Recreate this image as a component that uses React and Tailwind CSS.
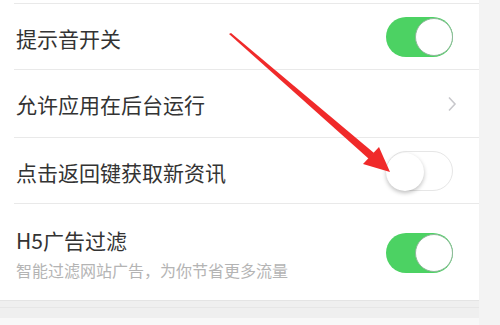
import React from 'react';

const font = { fontFamily: '"Noto Sans CJK SC", "Noto Sans", sans-serif' };

const Toggle = ({ on }) => (
  <div
    className={`relative w-[67px] h-[40px] rounded-full ${
      on ? 'bg-[#4cd263]' : 'bg-white border border-[#e6e6e6]'
    }`}
  >
    <div
      className={`absolute top-[1px] w-[38px] h-[38px] rounded-full bg-white ${
        on
          ? 'right-[0px] border border-[#8fb89a]'
          : 'left-[-1px] top-[0px] shadow-[0_2px_4px_rgba(0,0,0,0.25)]'
      }`}
    />
  </div>
);

const Row = ({ children, right, className }) => (
  <div className={`flex items-center justify-between pl-4 pr-[26px] ${className}`}>
    {children}
    {right}
  </div>
);

const Divider = () => <div className="ml-[14px] h-px bg-[#e9e9e9]" />;

export default function App() {
  return (
    <div className="relative flex w-[500px] h-[325px] overflow-hidden bg-[#f3f3f3]" style={font}>
      <div className="w-[479px] flex flex-col bg-white">
        <div className="h-[3px]" />
        <Divider />
        <Row className="h-[65px]" right={<Toggle on />}>
          <span className="text-[21px] text-[#333] mt-[4px]">提示音开关</span>
        </Row>
        <Divider />
        <Row
          className="h-[67px]"
          right={
            <svg width="10" height="16" viewBox="0 0 10 16" className="mr-[-4px]">
              <path d="M2 1.5 L8 8 L2 14.5" fill="none" stroke="#c8c8cc" strokeWidth="1.6" />
            </svg>
          }
        >
          <span className="text-[21px] text-[#333] mt-[2px]">允许应用在后台运行</span>
        </Row>
        <Divider />
        <Row className="h-[65px]" right={<Toggle on={false} />}>
          <span className="text-[21px] text-[#333] mt-[4px]">点击返回键获取新资讯</span>
        </Row>
        <Divider />
        <Row className="h-[96px]" right={<div className="mt-[2px]"><Toggle on /></div>}>
          <div className="flex flex-col mt-[2px]">
            <span className="text-[21px] leading-[30px] text-[#333]">H5广告过滤</span>
            <span className="text-[16px] leading-[24px] mt-[3px] text-[#b4b4b4]">
              智能过滤网站广告，为你节省更多流量
            </span>
          </div>
        </Row>
        <div className="h-[18px] bg-[#efefef] border-t border-[#e4e4e4]">
          <div className="mt-[6px] h-px bg-[#e6e6e6]" />
        </div>
        <div className="flex-1 bg-[#f8f8f8]" />
      </div>
      <svg className="absolute left-0 top-0 pointer-events-none" width="500" height="325">
        <polygon points="229,34 231,33 374,153 369,159" fill="#f02a2a" />
        <polygon points="390,172 363,164 379,147" fill="#f02a2a" />
      </svg>
    </div>
  );
}
